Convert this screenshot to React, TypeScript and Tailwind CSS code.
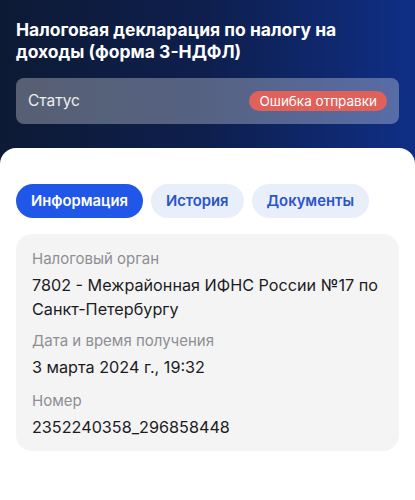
const FONT = "font-['Inter','Noto_Sans',sans-serif]";

const tabs = ["Информация", "История", "Документы"];

const details = [
  { label: "Налоговый орган", value: "7802 - Межрайонная ИФНС России №17 по Санкт-Петербургу" },
  { label: "Дата и время получения", value: "3 марта 2024 г., 19:32" },
  { label: "Номер", value: "2352240358_296858448" },
];

export default function App() {
  return (
    <div className={`${FONT} min-h-[500px] w-full bg-gradient-to-r from-[#0d1a34] via-[#0e1f4e] to-[#0f2f86]`}>
      <header className="px-4 pt-[19px] pb-6">
        <h1 className="text-[17.5px] leading-[22px] font-bold text-white">
          Налоговая декларация по налогу на доходы (форма 3-НДФЛ)
        </h1>
        <div className="mt-[15px] flex h-[46px] items-center justify-between rounded-lg bg-white/30 px-3">
          <span className="text-[15.5px] text-white/90">Статус</span>
          <span className="rounded-full bg-[#e0605a] px-[10px] py-[1px] text-[13.5px] leading-[18px] text-white">
            Ошибка отправки
          </span>
        </div>
      </header>

      <main className="min-h-[352px] rounded-t-2xl bg-white px-4 pt-9 pb-6">
        <div className="flex gap-2">
          {tabs.map((t, i) => (
            <button
              key={t}
              type="button"
              className={
                i === 0
                  ? "h-[34px] rounded-full bg-[#2157e8] px-[15px] text-[14.8px] font-semibold text-white"
                  : "h-[34px] rounded-full bg-[#e9eefb] px-[15px] text-[14.8px] font-semibold text-[#2a55c8]"
              }
            >
              {t}
            </button>
          ))}
        </div>

        <div className="mt-4 rounded-2xl bg-[#f4f4f5] px-4 pt-[15px] pb-[12px]">
          {details.map((d, i) => (
            <div key={d.label} className={i === 1 ? "mt-[10px]" : i === 2 ? "mt-[12px]" : ""}>
              <div className="text-[15px] leading-5 text-[#8e8e93]">{d.label}</div>
              <div className="mt-1 text-[16.2px] leading-6 text-[#1c1c1e]">{d.value}</div>
            </div>
          ))}
        </div>
      </main>
    </div>
  );
}
